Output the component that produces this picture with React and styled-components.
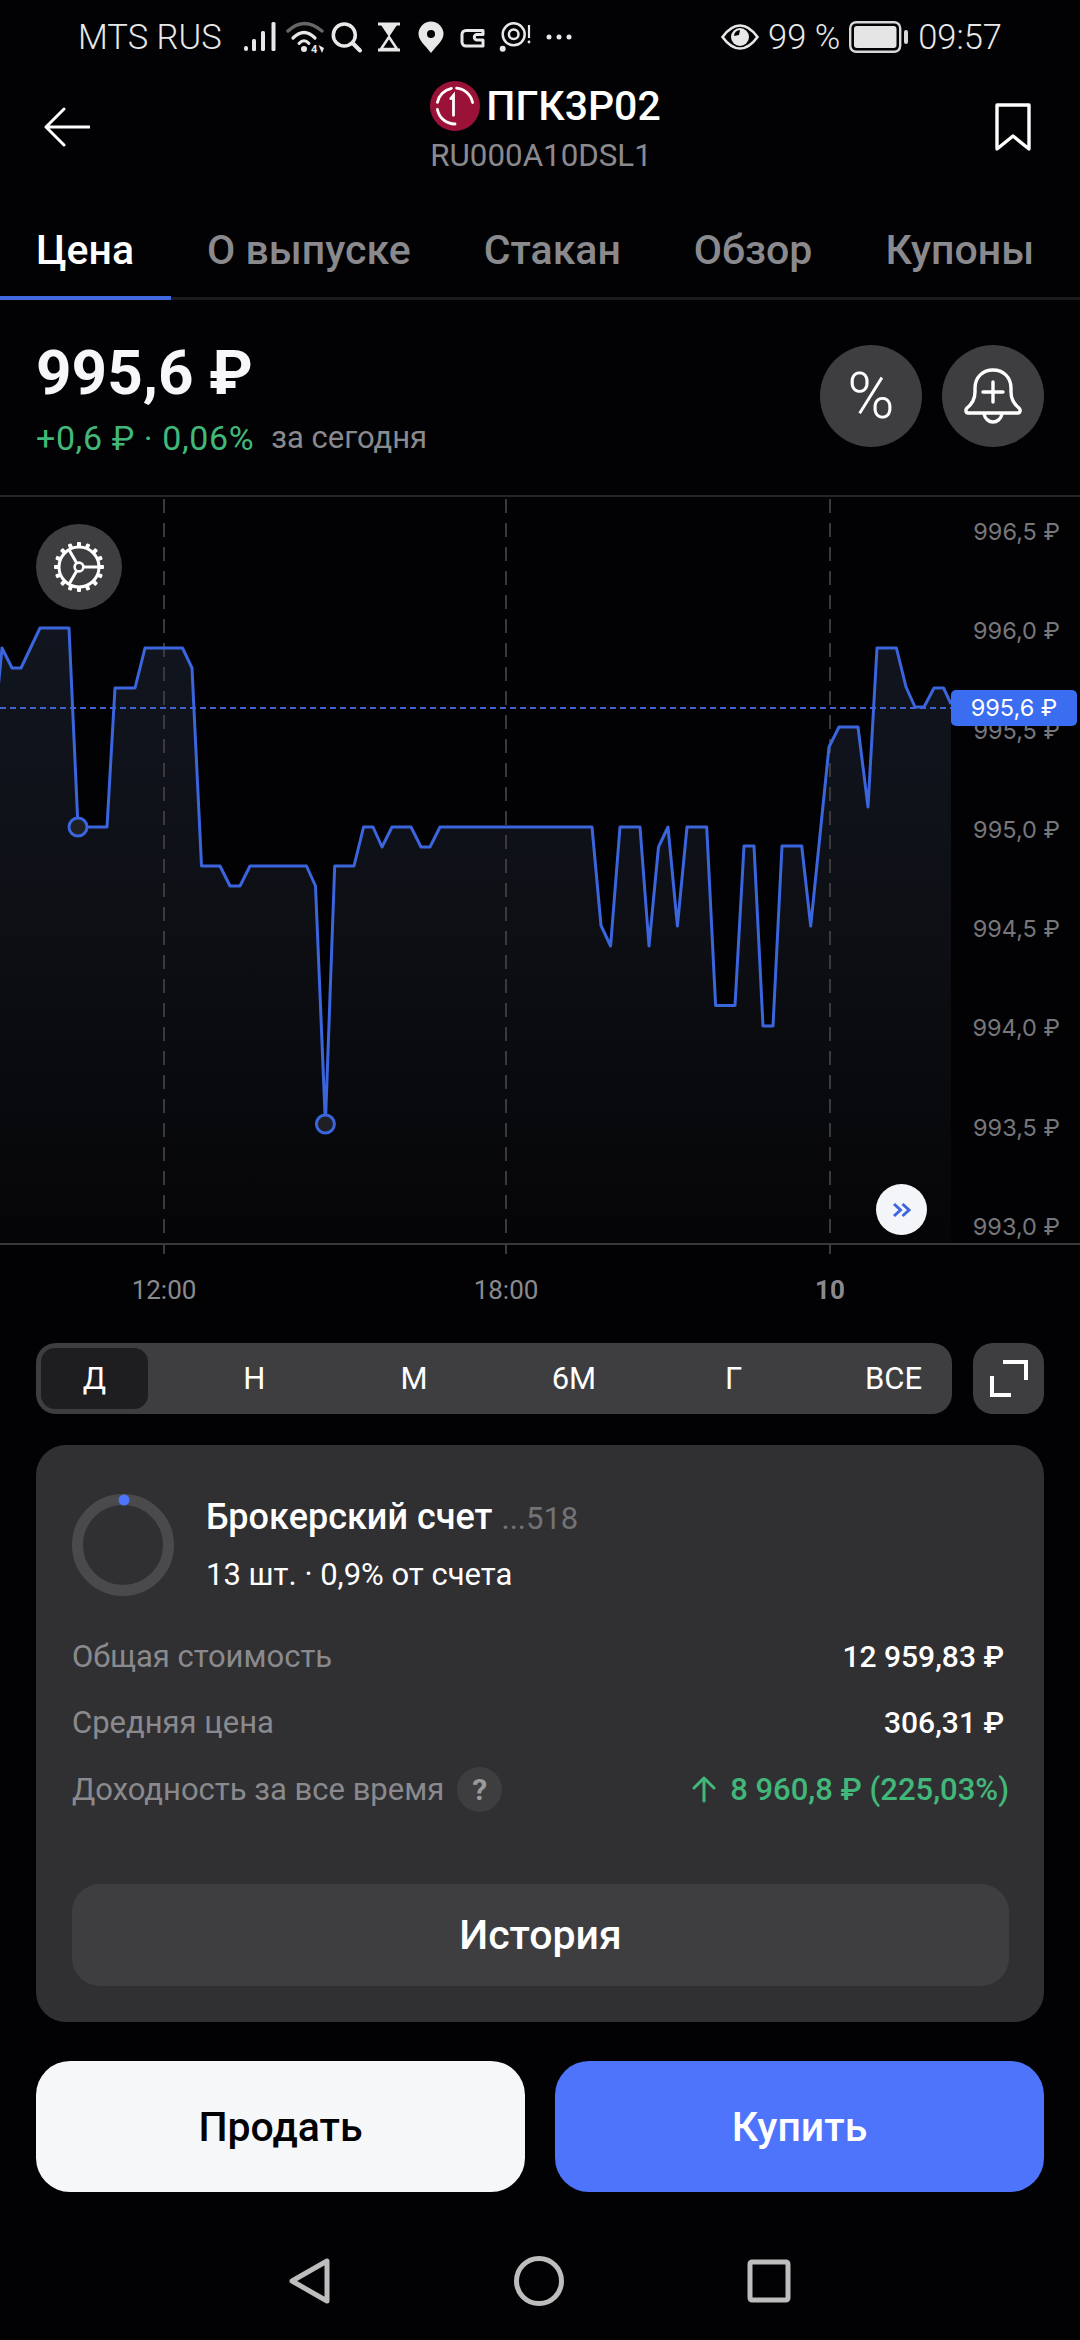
import React from "react";
import styled, { createGlobalStyle } from "styled-components";

const GlobalStyle = createGlobalStyle`
  html, body {
    margin: 0;
    background: #020204;
    font-family: "Roboto", "Liberation Sans", sans-serif;
  }
  * { box-sizing: border-box; }
`;

const Page = styled.div`
  width: 1080px;
  height: 2340px;
  background: #020204;
  color: #fff;
  overflow: hidden;
`;

/* status bar */
const StatusBar = styled.div`
  height: 72px;
  padding: 2px 78px 0;
  display: flex;
  align-items: center;
  justify-content: space-between;
  font-size: 34.5px;
  font-weight: 300;
  color: #e8e8e8;
`;

const StatusGroup = styled.div`
  display: flex;
  align-items: center;
  gap: ${(p) => p.$gap || 8}px;
`;

const StatusIconsSvg = styled.svg`
  display: block;
`;

/* header */
const Header = styled.div`
  height: 120px;
  padding: 0 49px 10px 44px;
  display: flex;
  align-items: center;
  justify-content: space-between;
`;

const TitleBlock = styled.div`
  display: flex;
  flex-direction: column;
  gap: 8px;
  margin-left: 6px;
`;

const TitleRow = styled.div`
  display: flex;
  align-items: center;
  gap: 6px;
  height: 50px;
  font-size: 41px;
  font-weight: 500;
  line-height: 44px;
`;

const Isin = styled.div`
  font-size: 31.3px;
  line-height: 34px;
  color: #8a8a8e;
`;

/* tabs */
const Tabs = styled.div`
  height: 108px;
  display: flex;
  align-items: flex-end;
  border-bottom: 3px solid #1b1b1e;
`;

const Tab = styled.div`
  height: 105px;
  margin-bottom: -3px;
  padding: 30px 37px 0 36px;
  font-size: 41px;
  font-weight: 500;
  line-height: 50px;
  white-space: nowrap;
  color: ${(p) => (p.$active ? "#fff" : "#8a8a8e")};
  border-bottom: 4px solid ${(p) => (p.$active ? "#4169e1" : "transparent")};
`;

/* price block */
const PriceRow = styled.div`
  height: 197px;
  padding: 38px 36px 0;
  display: flex;
  justify-content: space-between;
  align-items: flex-start;
  border-bottom: 2px solid #262628;
`;

const PriceText = styled.div`
  font-size: 62px;
  font-weight: 700;
  line-height: 70px;
  color: #f7f7f9;
`;

const ChangeRow = styled.div`
  margin-top: 10px;
  display: flex;
  gap: 17px;
  font-size: 34px;
  line-height: 40px;
`;

const ChangeValue = styled.span`
  color: #41b87a;
  letter-spacing: 0.6px;
`;

const ChangeNote = styled.span`
  color: #8a8a8e;
  font-size: 31px;
`;

const RoundButtons = styled.div`
  display: flex;
  gap: 20px;
  margin-top: 7px;
`;

const RoundButton = styled.div`
  width: 102px;
  height: 102px;
  border-radius: 50%;
  background: #3e3e40;
  display: flex;
  align-items: center;
  justify-content: center;
  font-size: 64px;
  font-weight: 300;
`;

/* chart */
const Chart = styled.div`
  position: relative;
  height: 748px;
`;

const ChartSvg = styled.svg`
  display: block;
  overflow: visible;
`;

const SettingsButton = styled.div`
  position: absolute;
  left: 36px;
  top: 27px;
  width: 86px;
  height: 86px;
  border-radius: 50%;
  background: #3e3e40;
  display: flex;
  align-items: center;
  justify-content: center;
`;

const PriceAxis = styled.div`
  position: absolute;
  top: 20px;
  right: 20px;
  height: 725px;
  display: flex;
  flex-direction: column;
  justify-content: space-between;
  font-family: "Inter", "Roboto", sans-serif;
  font-size: 23.5px;
  line-height: 30px;
  text-align: right;
  color: #77777b;
`;

const PriceTag = styled.div`
  position: absolute;
  left: 951px;
  top: 193px;
  width: 126px;
  height: 36px;
  border-radius: 5px;
  background: #3a6df0;
  color: #fff;
  font-family: "Inter", "Roboto", sans-serif;
  font-size: 23.5px;
  line-height: 36px;
  text-align: center;
`;

const JumpButton = styled.div`
  position: absolute;
  left: 876px;
  top: 687px;
  width: 51px;
  height: 51px;
  border-radius: 50%;
  background: #f4f5f8;
  display: flex;
  align-items: center;
  justify-content: center;
`;

const TimeAxis = styled.div`
  position: relative;
  height: 98px;
`;

const TimeTick = styled.span`
  position: absolute;
  left: ${(p) => p.$x}px;
  top: 30px;
  transform: translateX(-50%);
  font-size: 26px;
  line-height: 30px;
  font-weight: ${(p) => (p.$bold ? 700 : 400)};
  color: #8a8a8e;
`;

/* period selector */
const PeriodRow = styled.div`
  padding: 0 36px;
  display: flex;
  justify-content: space-between;
`;

const PeriodBar = styled.div`
  width: 916px;
  height: 71px;
  padding: 5px;
  border-radius: 20px;
  background: #3e3e40;
  display: flex;
  justify-content: space-between;
`;

const Period = styled.div`
  width: 107px;
  border-radius: 14px;
  background: ${(p) => (p.$active ? "#1e1e20" : "transparent")};
  display: flex;
  align-items: center;
  justify-content: center;
  font-size: 31px;
`;

const ExpandButton = styled.div`
  width: 71px;
  height: 71px;
  border-radius: 20px;
  background: #3e3e40;
  display: flex;
  align-items: center;
  justify-content: center;
`;

/* position card */
const Card = styled.div`
  margin: 31px 36px 0;
  height: 577px;
  padding: 49px 35px 36px 36px;
  border-radius: 30px;
  background: #303033;
  display: flex;
  flex-direction: column;
`;

const AccountRow = styled.div`
  display: flex;
  align-items: flex-start;
  gap: 32px;
  height: 101px;
  margin-bottom: 28px;
`;

const AccountText = styled.div`
  display: flex;
  flex-direction: column;
  gap: 18px;
  padding-top: 3px;
`;

const AccountName = styled.div`
  font-size: 36px;
  font-weight: 500;
  line-height: 40px;
`;

const AccountMask = styled.span`
  margin-left: 9px;
  font-weight: 400;
  font-size: 31px;
  color: #737376;
`;

const AccountShare = styled.div`
  font-size: 31px;
  line-height: 36px;
`;

const InfoRow = styled.div`
  height: 66.5px;
  display: flex;
  align-items: center;
  justify-content: space-between;
  font-size: 31px;
`;

const InfoLabel = styled.div`
  display: flex;
  align-items: center;
  gap: 13px;
  color: #8a8a8e;
`;

const HelpDot = styled.span`
  width: 45px;
  height: 45px;
  border-radius: 50%;
  background: #3e3e41;
  color: #9a9a9d;
  font-weight: 700;
  font-size: 30px;
  display: flex;
  align-items: center;
  justify-content: center;
`;

const InfoValue = styled.div`
  display: flex;
  align-items: center;
  gap: 14px;
  font-size: ${(p) => (p.$up ? 31 : 30)}px;
  font-weight: 500;
  margin-right: ${(p) => p.$inset || 0}px;
  color: ${(p) => (p.$up ? "#41b87a" : "#fff")};
`;

const HistoryButton = styled.div`
  margin-top: auto;
  height: 102px;
  border-radius: 28px;
  background: #3e3e41;
  display: flex;
  align-items: center;
  justify-content: center;
  font-size: 41px;
  font-weight: 500;
`;

/* actions */
const Actions = styled.div`
  margin-top: 39px;
  padding: 0 36px;
  display: grid;
  grid-template-columns: 1fr 1fr;
  gap: 30px;
`;

const ActionButton = styled.div`
  height: 131px;
  border-radius: 34px;
  background: ${(p) => (p.$primary ? "#4d74fb" : "#f6f7f9")};
  color: ${(p) => (p.$primary ? "#fff" : "#020204")};
  display: flex;
  align-items: center;
  justify-content: center;
  font-size: 41px;
  font-weight: 500;
`;

/* android nav */
const NavBar = styled.div`
  margin-top: 64px;
  display: flex;
  justify-content: center;
  align-items: center;
  gap: 183px;
`;

const linePoints = [
  [-2, 690], [2, 648], [12, 668], [21, 668], [40, 628], [69, 628], [78, 827], [107, 827],
  [115, 688], [135, 688], [145, 648], [182.5, 648], [192, 668], [201.5, 866], [220, 866],
  [230, 886], [240, 886], [250, 866], [306.5, 866], [315.5, 886], [325.4, 1124], [334.7, 866],
  [354, 866], [363.6, 827], [373, 827], [382, 847], [392, 827], [411, 827], [421, 847],
  [430, 847], [440, 827], [592, 827], [601, 925.5], [610.6, 946], [620, 827], [640, 827],
  [649, 946], [658.5, 847], [668, 827], [677.4, 926], [687, 827], [706.7, 827], [715.6, 1005.5],
  [735, 1005.5], [744, 846], [754, 846], [763, 1026], [773, 1026], [782, 846], [801.7, 846],
  [810.7, 926], [829, 747], [839, 727], [858, 727], [868, 807], [877, 648], [896.4, 648],
  [906, 687], [915, 707], [924, 707], [934, 688], [943.6, 688], [951, 704],
];
const lineString = linePoints.map((p) => p.join(",")).join(" ");
const areaString = `${lineString} 951,1243 -2,1243`;

const axisPrices = ["996,5 ₽", "996,0 ₽", "995,5 ₽", "995,0 ₽", "994,5 ₽", "994,0 ₽", "993,5 ₽", "993,0 ₽"];
const periods = ["Д", "Н", "М", "6М", "Г", "ВСЕ"];
const tabs = ["Цена", "О выпуске", "Стакан", "Обзор", "Купоны"];

function LeftStatusIcons() {
  const c = "#e8e8e8";
  return (
    <StatusIconsSvg width="330" height="36" viewBox="243 18 330 36" fill="none">
      <rect x="243" y="45" width="4" height="5" rx="2" fill={c} />
      <rect x="251" y="38" width="4" height="12" rx="1.5" fill={c} />
      <rect x="260" y="30" width="4" height="20" rx="1.5" fill={c} />
      <rect x="270.5" y="21" width="4" height="29" rx="1.5" fill={c} />

      <path d="M287 30 Q303 15 321 30" stroke="#666" strokeWidth="3.5" strokeLinecap="round" />
      <path d="M292 37 Q303 26 314 37" stroke={c} strokeWidth="3.2" strokeLinecap="round" />
      <path d="M298 42.5 Q303 37 308 42.5" stroke={c} strokeWidth="3" strokeLinecap="round" />
      <circle cx="303" cy="48" r="3" fill={c} />
      <text x="310" y="52" fontSize="11" fontWeight="700" fill={c} fontFamily="Roboto">4</text>
      <path d="M317.5 44 L321 52 L323 47 Z" fill={c} />

      <circle cx="343.3" cy="34" r="11" stroke={c} strokeWidth="3.5" />
      <path d="M351.5 42 L359 49.5" stroke={c} strokeWidth="4" strokeLinecap="round" />

      <path d="M377 23 H399 M377 49 H399" stroke={c} strokeWidth="3" />
      <path d="M380 24 H396 L388 36 Z" fill={c} />
      <path d="M388 36 L380 48 H396 Z" stroke={c} strokeWidth="2.5" strokeLinejoin="round" />

      <path d="M430 52 C424 44 417.5 39.5 417.5 33 a12.5 12.5 0 0 1 25 0 C442.5 39.5 436 44 430 52 Z" fill={c} />
      <circle cx="430" cy="33" r="4" fill="#020204" />

      <path
        d="M482 29.5 H465 a4 4 0 0 0 -4 4 v7.5 a4 4 0 0 0 4 4 h17 v-6 h-6 a2.7 2.7 0 0 1 0 -5.4 h6 z"
        stroke={c}
        strokeWidth="3"
        strokeLinejoin="round"
      />

      <circle cx="512.7" cy="33.3" r="11" stroke={c} strokeWidth="2.5" />
      <circle cx="512.7" cy="33.3" r="4.8" stroke={c} strokeWidth="2.5" />
      <circle cx="501.7" cy="47.7" r="3" fill={c} />
      <path d="M528 24 V37" stroke={c} strokeWidth="2.2" />
      <circle cx="528" cy="41" r="1.4" fill={c} />

      <circle cx="548" cy="36" r="2.5" fill={c} />
      <circle cx="558" cy="36" r="2.5" fill={c} />
      <circle cx="568" cy="36" r="2.5" fill={c} />
    </StatusIconsSvg>
  );
}

function EyeIcon() {
  return (
    <svg width="38" height="26" viewBox="0 0 38 26" fill="none">
      <path d="M1.5 13 C8 4 13 1.5 19 1.5 C25 1.5 30 4 36.5 13 C30 22 25 24.5 19 24.5 C13 24.5 8 22 1.5 13 Z" stroke="#e8e8e8" strokeWidth="2.6" />
      <circle cx="19" cy="13" r="9" fill="#e8e8e8" />
      <path d="M19 6 a6 6 0 0 0 -6 6 l5 -1 z" fill="#020204" />
    </svg>
  );
}

function BatteryIcon() {
  return (
    <svg width="60" height="32" viewBox="0 0 60 32" fill="none">
      <rect x="1.2" y="1.2" width="50" height="29.6" rx="6" stroke="#d8d8d8" strokeWidth="2.4" />
      <rect x="5" y="5" width="42.5" height="22" rx="3" fill="#e5e5e5" />
      <rect x="55" y="9" width="4" height="14" rx="2" fill="#d8d8d8" />
    </svg>
  );
}

function BackArrow() {
  return (
    <svg width="46" height="40" viewBox="0 0 46 40" fill="none" stroke="#fff" strokeWidth="3" strokeLinecap="round" strokeLinejoin="round">
      <path d="M45 20 H2 M20 2 L2 20 L20 38" />
    </svg>
  );
}

function BookmarkIcon() {
  return (
    <svg width="36" height="49" viewBox="0 0 36 49" fill="none" stroke="#fff" strokeWidth="3.4" strokeLinejoin="round">
      <path d="M2 2 H34 V46 L18 33 L2 46 Z" />
    </svg>
  );
}

function IssuerLogo() {
  return (
    <svg width="50" height="50" viewBox="0 0 50 50" fill="none">
      <circle cx="25" cy="25" r="25" fill="#9b1239" />
      <g stroke="#fff" strokeWidth="2.8" strokeLinecap="round">
        <path d="M26.6 7.1 A18 18 0 0 1 42.6 21.6" />
        <path d="M21.4 7.4 A18 18 0 0 0 7.4 21.4" />
        <path d="M7.4 28.4 A18 18 0 0 0 25 43" />
        <path d="M20.8 17.6 L23.5 14.3 V34.3" />
      </g>
    </svg>
  );
}

function BellPlusIcon() {
  return (
    <svg width="58" height="56" viewBox="0 0 58 56" fill="none" stroke="#fff" strokeWidth="3.4" strokeLinecap="round" strokeLinejoin="round">
      <path d="M4 45 C2 45 1 42 3 40 C8 36 11 31 11 24 V20 C11 9 19 2 29 2 C39 2 47 9 47 20 V24 C47 31 50 36 55 40 C57 42 56 45 54 45 Z" />
      <path d="M20 46 C21 51 25 54 29 54 C33 54 37 51 38 46" />
      <path d="M19 24 H39 M29 14 V34" />
    </svg>
  );
}

function GearIcon() {
  const teeth = Array.from({ length: 16 }, (_, i) => (i * 360) / 16);
  return (
    <svg width="52" height="52" viewBox="-26 -26 52 52" fill="none" stroke="#fff">
      <circle r="20" strokeWidth="3" />
      <circle r="4.4" strokeWidth="2.6" />
      {teeth.map((a) => (
        <rect key={a} x="-2" y="-25" width="4" height="5" rx="1" fill="#fff" stroke="none" transform={`rotate(${a})`} />
      ))}
      <path d="M4.4 0 H20 M-2.2 -3.8 L-10 -17.3 M-2.2 3.8 L-10 17.3" strokeWidth="3" />
    </svg>
  );
}

function ExpandIcon() {
  return (
    <svg width="38" height="37" viewBox="0 0 38 37" fill="none" stroke="#fff" strokeWidth="4">
      <path d="M13 2 H36 V20 M2 16 V35 H21" />
    </svg>
  );
}

function AccountRing() {
  return (
    <svg width="102" height="102" viewBox="0 0 102 102" fill="none">
      <circle cx="51" cy="51" r="45.5" stroke="#4a4a4d" strokeWidth="11" />
      <circle cx="52" cy="6" r="5.5" fill="#4d74fb" />
    </svg>
  );
}

function UpArrow() {
  return (
    <svg width="24" height="28" viewBox="0 0 24 28" fill="none" stroke="#41b87a" strokeWidth="3" strokeLinecap="round" strokeLinejoin="round">
      <path d="M12 26 V3 M2 13 L12 3 L22 13" />
    </svg>
  );
}

function PriceChart() {
  return (
    <ChartSvg width="1080" height="748" viewBox="0 497 1080 748" fill="none">
      <defs>
        <linearGradient id="area" gradientUnits="userSpaceOnUse" x1="0" y1="628" x2="0" y2="1243">
          <stop offset="0" stopColor="#11151f" />
          <stop offset="0.5" stopColor="#0d0f14" />
          <stop offset="1" stopColor="#050507" />
        </linearGradient>
      </defs>
      <polygon points={areaString} fill="url(#area)" />
      {[164, 506, 830].map((x) => (
        <line key={x} x1={x} x2={x} y1="499" y2="1254" stroke="#3a3a3d" strokeWidth="2" strokeDasharray="14 10" />
      ))}
      <line x1="0" x2="951" y1="708" y2="708" stroke="#3f62cc" strokeWidth="2" strokeDasharray="6 4" />
      <line x1="0" x2="1080" y1="1244" y2="1244" stroke="#38383b" strokeWidth="2" />
      <polyline points={lineString} stroke="#3a65dc" strokeWidth="3" strokeLinejoin="round" />
      <circle cx="78" cy="827" r="9" fill="#1e2024" stroke="#3a65dc" strokeWidth="3" />
      <circle cx="325.4" cy="1124" r="9" fill="#1e2024" stroke="#3a65dc" strokeWidth="3" />
    </ChartSvg>
  );
}

export default function App() {
  return (
    <Page>
      <GlobalStyle />
      <StatusBar>
        <StatusGroup $gap={22}>
          <span>MTS RUS</span>
          <LeftStatusIcons />
        </StatusGroup>
        <StatusGroup $gap={9}>
          <EyeIcon />
          <span>99 %</span>
          <BatteryIcon />
          <span>09:57</span>
        </StatusGroup>
      </StatusBar>

      <Header>
        <BackArrow />
        <TitleBlock>
          <TitleRow>
            <IssuerLogo />
            ПГК3Р02
          </TitleRow>
          <Isin>RU000A10DSL1</Isin>
        </TitleBlock>
        <BookmarkIcon />
      </Header>

      <Tabs>
        {tabs.map((t, i) => (
          <Tab key={t} $active={i === 0}>{t}</Tab>
        ))}
      </Tabs>

      <PriceRow>
        <div>
          <PriceText>995,6 ₽</PriceText>
          <ChangeRow>
            <ChangeValue>+0,6 ₽ · 0,06%</ChangeValue>
            <ChangeNote>за сегодня</ChangeNote>
          </ChangeRow>
        </div>
        <RoundButtons>
          <RoundButton>%</RoundButton>
          <RoundButton><BellPlusIcon /></RoundButton>
        </RoundButtons>
      </PriceRow>

      <Chart>
        <PriceChart />
        <SettingsButton><GearIcon /></SettingsButton>
        <PriceAxis>
          {axisPrices.map((p) => (
            <span key={p}>{p}</span>
          ))}
        </PriceAxis>
        <PriceTag>995,6 ₽</PriceTag>
        <JumpButton>
          <svg width="20" height="16" viewBox="0 0 20 16" fill="none" stroke="#3f66e0" strokeWidth="3">
            <path d="M2 2 L8.5 8 L2 14 M10.5 2 L17 8 L10.5 14" />
          </svg>
        </JumpButton>
      </Chart>

      <TimeAxis>
        <TimeTick $x={164}>12:00</TimeTick>
        <TimeTick $x={506}>18:00</TimeTick>
        <TimeTick $x={830} $bold>10</TimeTick>
      </TimeAxis>

      <PeriodRow>
        <PeriodBar>
          {periods.map((p, i) => (
            <Period key={p} $active={i === 0}>{p}</Period>
          ))}
        </PeriodBar>
        <ExpandButton><ExpandIcon /></ExpandButton>
      </PeriodRow>

      <Card>
        <AccountRow>
          <AccountRing />
          <AccountText>
            <AccountName>
              Брокерский счет<AccountMask>...518</AccountMask>
            </AccountName>
            <AccountShare>13 шт. · 0,9% от счета</AccountShare>
          </AccountText>
        </AccountRow>
        <InfoRow>
          <InfoLabel>Общая стоимость</InfoLabel>
          <InfoValue $inset={5}>12 959,83 ₽</InfoValue>
        </InfoRow>
        <InfoRow>
          <InfoLabel>Средняя цена</InfoLabel>
          <InfoValue $inset={5}>306,31 ₽</InfoValue>
        </InfoRow>
        <InfoRow>
          <InfoLabel>
            Доходность за все время
            <HelpDot>?</HelpDot>
          </InfoLabel>
          <InfoValue $up>
            <UpArrow />
            8 960,8 ₽ (225,03%)
          </InfoValue>
        </InfoRow>
        <HistoryButton>История</HistoryButton>
      </Card>

      <Actions>
        <ActionButton>Продать</ActionButton>
        <ActionButton $primary>Купить</ActionButton>
      </Actions>

      <NavBar>
        <svg width="42" height="48" viewBox="0 0 42 48" fill="none" stroke="#bdbdbd" strokeWidth="5" strokeLinejoin="round">
          <path d="M38 4 V44 L3 24 Z" />
        </svg>
        <svg width="50" height="50" viewBox="0 0 50 50" fill="none" stroke="#bdbdbd" strokeWidth="5">
          <circle cx="25" cy="25" r="22.5" />
        </svg>
        <svg width="44" height="44" viewBox="0 0 44 44" fill="none" stroke="#bdbdbd" strokeWidth="5" strokeLinejoin="round">
          <rect x="3" y="3" width="38" height="38" rx="2" />
        </svg>
      </NavBar>
    </Page>
  );
}
